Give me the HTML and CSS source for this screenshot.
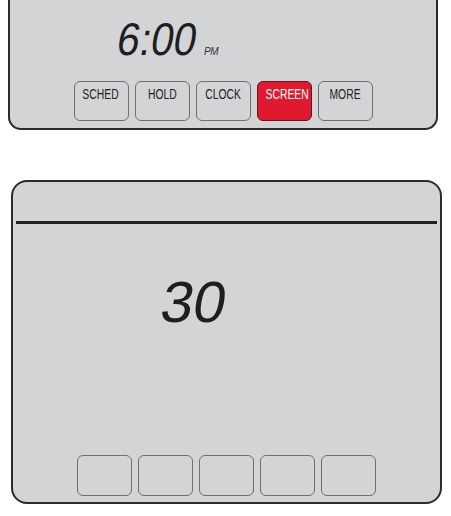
FILE: index.html
```html
<!DOCTYPE html>
<html>
<head>
<meta charset="utf-8">
<link rel="stylesheet" href="styles.css">
</head>
<body>
<div class="page">
  <section class="panel panel-top">
    <div class="clock-row">
      <span class="lcd lcd-clock">6:00</span><span class="ampm">PM</span>
    </div>
    <div class="btn-row">
      <div class="btn"><span class="lbl">SCHED</span></div>
      <div class="btn"><span class="lbl">HOLD</span></div>
      <div class="btn"><span class="lbl">CLOCK</span></div>
      <div class="btn btn-active"><span class="lbl">SCREEN</span></div>
      <div class="btn"><span class="lbl">MORE</span></div>
    </div>
  </section>

  <section class="panel panel-bottom">
    <div class="divider"></div>
    <div class="count-row">
      <span class="lcd lcd-count">30</span>
    </div>
    <div class="btn-row btn-row-bottom">
      <div class="btn"></div>
      <div class="btn"></div>
      <div class="btn"></div>
      <div class="btn"></div>
      <div class="btn"></div>
    </div>
  </section>
</div>
</body>
</html>
```

FILE: styles.css
```css
html, body {
  margin: 0;
  padding: 0;
  background: #ffffff;
}

.page {
  width: 451px;
  height: 516px;
  font-family: "Liberation Sans", Arial, sans-serif;
}

.panel {
  background: #d3d4d6;
  box-sizing: border-box;
  border: 2px solid #2b2b2b;
}

.panel-top {
  margin-left: 8px;
  width: 430px;
  height: 130px;
  border-top: none;
  border-radius: 0 0 13px 13px;
  display: flex;
  flex-direction: column;
}

.clock-row {
  height: 81px;
  padding-left: 112px;
  box-sizing: border-box;
  padding-top: 16px;
  display: flex;
  align-items: flex-start;
}

.lcd {
  color: #1e1e1e;
  display: inline-block;
  font-family: "Liberation Sans", Arial, sans-serif;
  line-height: 1;
  transform-origin: left top;
}

.lcd-clock {
  font-size: 46px;
  height: 46px;
  transform: skewX(-10deg) scaleX(0.88);
  width: 82px;
}

.ampm {
  font-size: 10px;
  font-style: italic;
  color: #333;
  margin-top: 30px;
  letter-spacing: -0.3px;
}

.btn-row {
  display: flex;
  justify-content: center;
  gap: 6px;
}

.btn {
  width: 55px;
  height: 40px;
  box-sizing: border-box;
  border: 1.3px solid #6f6f6f;
  border-radius: 6px;
  background: #d3d4d6;
  text-align: center;
  padding-top: 3px;
}

.btn-active {
  background: #e0192f;
  border-color: #5b1a20;
}

.lbl {
  display: inline-block;
  font-size: 14px;
  line-height: 14px;
  color: #222222;
  transform: scaleX(0.74);
  white-space: nowrap;
}

.btn-active .lbl {
  color: #ffffff;
}

.panel-bottom {
  margin-top: 50px;
  margin-left: 11px;
  width: 431px;
  height: 324px;
  border-radius: 16px;
  display: flex;
  flex-direction: column;
  padding: 0 3px;
}

.divider {
  margin-top: 39px;
  height: 3px;
  background: #222;
}

.count-row {
  padding-left: 151px;
  padding-top: 49px;
  height: 231px;
  box-sizing: border-box;
}

.lcd-count {
  font-size: 58px;
  transform: skewX(-10deg);
}

.btn-row-bottom .btn {
  height: 41px;
}
```
